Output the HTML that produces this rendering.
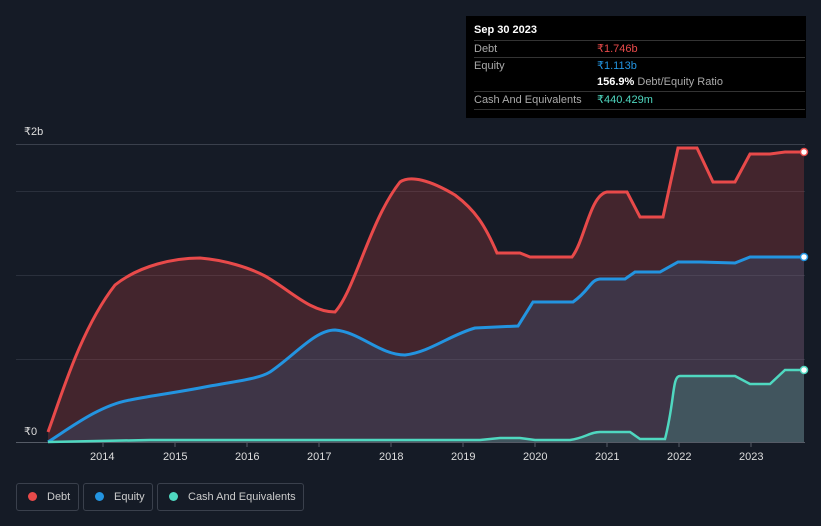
<!DOCTYPE html>
<html><head><meta charset="utf-8"><style>
body{margin:0;width:821px;height:526px;background:#151b26;font-family:"Liberation Sans",sans-serif;overflow:hidden;position:relative}
.tt{position:absolute;left:466px;top:16px;width:340px;height:102px;background:#000;color:#fff;font-size:11px}
.tt .r{position:absolute;left:8px;width:331px;border-top:1px solid #333;height:16px;line-height:16px;color:#aaa}
.tt .v{position:absolute;left:123px}
.leg{position:absolute;top:483px;border:1px solid #3a404c;border-radius:3px;color:#ccc;font-size:11px;line-height:26px;white-space:nowrap;box-sizing:border-box;height:28px}
.dot{display:inline-block;width:9px;height:9px;border-radius:50%;margin:0 10px 0 11px;vertical-align:-1px}
.ax{position:absolute;color:#ddd;font-size:11px}
</style></head><body>
<svg width="821" height="526" style="position:absolute;left:0;top:0">
<g stroke="#2a303c" stroke-width="1">
<line x1="16" x2="805" y1="144.5" y2="144.5" stroke="#3a404c"/>
<line x1="16" x2="805" y1="191.5" y2="191.5"/>
<line x1="16" x2="805" y1="275.5" y2="275.5"/>
<line x1="16" x2="805" y1="359.5" y2="359.5"/>
</g>
<line x1="16" x2="805" y1="442.5" y2="442.5" stroke="#555b66"/>
<g stroke="#555b66"><line x1="103" x2="103" y1="442" y2="447"/><line x1="175" x2="175" y1="442" y2="447"/><line x1="247" x2="247" y1="442" y2="447"/><line x1="319" x2="319" y1="442" y2="447"/><line x1="391" x2="391" y1="442" y2="447"/><line x1="463" x2="463" y1="442" y2="447"/><line x1="535" x2="535" y1="442" y2="447"/><line x1="607" x2="607" y1="442" y2="447"/><line x1="679" x2="679" y1="442" y2="447"/><line x1="751" x2="751" y1="442" y2="447"/></g>
<defs>
<path id="d" d="M48,432 C60,400 80,330 115,285 C140,265 175,258 200,258 C225,260 250,268 265,276 C290,290 310,312 335,312 C355,290 370,220 400,182 C410,175 430,180 455,195 C475,210 485,225 497,253 L520,253 L530,257 L572,257 C585,240 590,195 607,192 L627,192 L640,217 L663,217 L678,148 L697,148 L713,182 L735,182 L750,154 L770,154 L785,152 L804,152"/>
<path id="e" d="M48,442 C70,428 100,405 130,400 C160,394 175,393 210,386 C245,380 260,378 270,372 C295,355 315,330 335,330 C360,332 380,355 405,355 C430,352 450,335 475,328 L518,326 L533,302 L573,302 C590,290 590,280 600,279 L625,279 L635,272 L660,272 L678,262 L700,262 L735,263 L750,257 L804,257"/>
<path id="c" d="M48,442 L150,440 L480,440 L500,438 L520,438 L535,440 L570,440 C585,438 590,432 600,432 L630,432 L640,439 L665,439 C675,400 672,376 680,376 L735,376 L750,384 L770,384 L785,370 L804,370"/>
</defs>
<path d="M48,432 C60,400 80,330 115,285 C140,265 175,258 200,258 C225,260 250,268 265,276 C290,290 310,312 335,312 C355,290 370,220 400,182 C410,175 430,180 455,195 C475,210 485,225 497,253 L520,253 L530,257 L572,257 C585,240 590,195 607,192 L627,192 L640,217 L663,217 L678,148 L697,148 L713,182 L735,182 L750,154 L770,154 L785,152 L804,152 L804,442 L48,442Z" fill="#e84a4a" fill-opacity="0.22"/>
<path d="M48,442 C70,428 100,405 130,400 C160,394 175,393 210,386 C245,380 260,378 270,372 C295,355 315,330 335,330 C360,332 380,355 405,355 C430,352 450,335 475,328 L518,326 L533,302 L573,302 C590,290 590,280 600,279 L625,279 L635,272 L660,272 L678,262 L700,262 L735,263 L750,257 L804,257 L804,442Z" fill="#2394e0" fill-opacity="0.15"/>
<path d="M48,442 L150,440 L480,440 L500,438 L520,438 L535,440 L570,440 C585,438 590,432 600,432 L630,432 L640,439 L665,439 C675,400 672,376 680,376 L735,376 L750,384 L770,384 L785,370 L804,370 L804,442Z" fill="#4fd8c0" fill-opacity="0.2"/>
<use href="#d" fill="none" stroke="#e84a4a" stroke-width="3"/>
<use href="#e" fill="none" stroke="#2394e0" stroke-width="3"/>
<use href="#c" fill="none" stroke="#4fd8c0" stroke-width="2.5"/>
<circle cx="804" cy="152" r="3.5" fill="#fff" stroke="#e84a4a" stroke-width="1.5"/>
<circle cx="804" cy="257" r="3.5" fill="#fff" stroke="#2394e0" stroke-width="1.5"/>
<circle cx="804" cy="370" r="3.5" fill="#fff" stroke="#4fd8c0" stroke-width="1.5"/>
</svg>
<div class="ax" style="left:24px;top:125px">₹2b</div>
<div class="ax" style="left:24px;top:425px">₹0</div>
<div class="ax" style="left:90px;top:451px">2014</div><div class="ax" style="left:163px;top:451px">2015</div><div class="ax" style="left:235px;top:451px">2016</div><div class="ax" style="left:307px;top:451px">2017</div><div class="ax" style="left:379px;top:451px">2018</div><div class="ax" style="left:451px;top:451px">2019</div><div class="ax" style="left:523px;top:451px">2020</div><div class="ax" style="left:595px;top:451px">2021</div><div class="ax" style="left:667px;top:451px">2022</div><div class="ax" style="left:739px;top:451px">2023</div>
<div class="tt">
<div style="position:absolute;left:8px;top:8px;font-weight:bold">Sep 30 2023</div>
<div class="r" style="top:24px">Debt<span class="v" style="color:#e84a4a">₹1.746b</span></div>
<div class="r" style="top:41px">Equity<span class="v" style="color:#2394e0">₹1.113b</span></div>
<div class="r" style="top:58px;border-top:none"><span class="v"><b style="color:#fff">156.9%</b> Debt/Equity Ratio</span></div>
<div class="r" style="top:75px">Cash And Equivalents<span class="v" style="color:#4fd8c0">₹440.429m</span></div>
<div class="r" style="top:93px;height:0"></div>
</div>
<div class="leg" style="left:16px;width:63px"><span class="dot" style="background:#e84a4a"></span>Debt</div>
<div class="leg" style="left:83px;width:70px"><span class="dot" style="background:#2394e0"></span>Equity</div>
<div class="leg" style="left:157px;width:147px"><span class="dot" style="background:#4fd8c0"></span>Cash And Equivalents</div>
</body></html>
